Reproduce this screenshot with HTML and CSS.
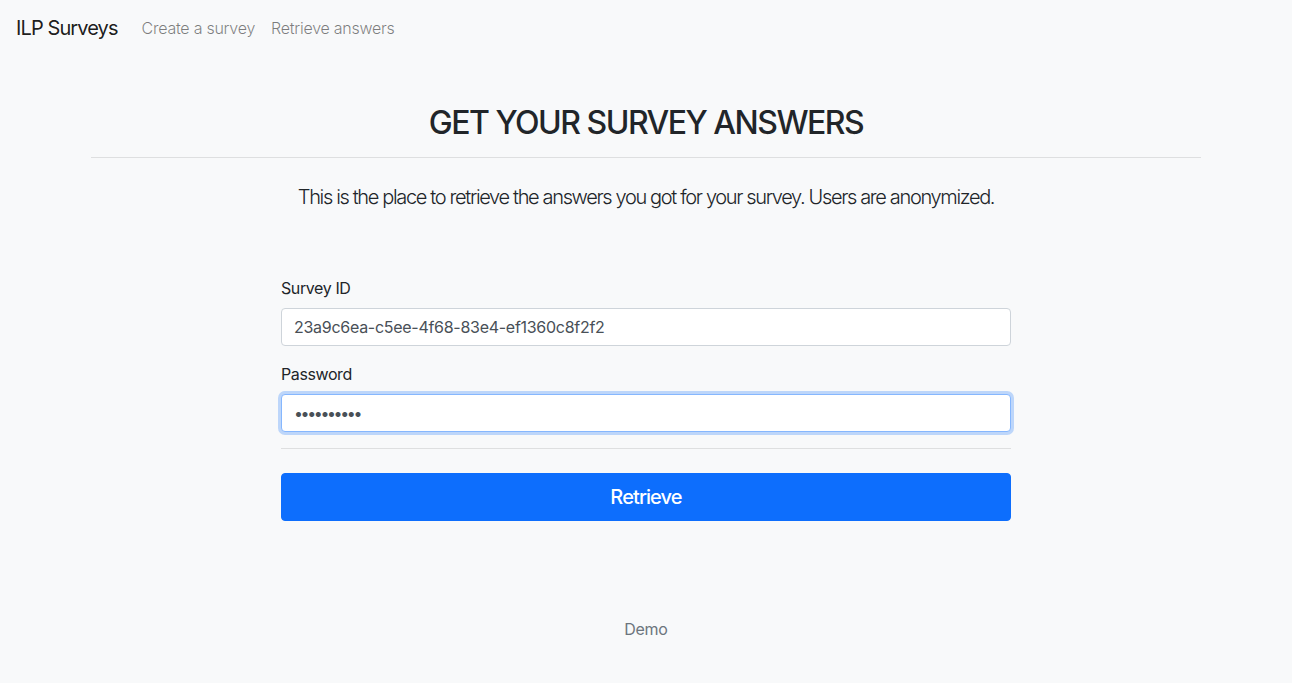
FILE: index.html
```html
<!DOCTYPE html>
<html lang="en">
<head>
<meta charset="utf-8">
<title>ILP Surveys</title>
<link rel="stylesheet" href="styles.css">
</head>
<body>
<nav class="navbar">
  <a class="brand" href="#">ILP Surveys</a>
  <ul class="nav-links">
    <li><a href="#">Create a survey</a></li>
    <li><a href="#">Retrieve answers</a></li>
  </ul>
</nav>
<main class="container">
  <h2 class="title">GET YOUR SURVEY ANSWERS</h2>
  <hr class="rule">
  <p class="lead">This is the place to retrieve the answers you got for your survey. Users are anonymized.</p>
  <form class="form">
    <div class="form-group">
      <label class="label" for="sid">Survey ID</label>
      <input class="control" id="sid" type="text" value="23a9c6ea-c5ee-4f68-83e4-ef1360c8f2f2">
    </div>
    <div class="form-group">
      <label class="label" for="pw">Password</label>
      <input class="control focused password" id="pw" type="password" value="abcdefghij">
    </div>
    <hr class="rule form-rule">
    <button class="btn" type="button">Retrieve</button>
  </form>
  <footer class="footer">Demo</footer>
</main>
</body>
</html>
```

FILE: styles.css
```css
* { box-sizing: border-box; }
html, body { margin: 0; padding: 0; }
body {
  background: #f8f9fa;
  color: #212529;
  font-family: Inter, "Noto Sans", "Liberation Sans", sans-serif;
  font-size: 16px;
  line-height: 1.5;
  letter-spacing: -0.35px;
  min-height: 683px;
}
.navbar {
  display: flex;
  align-items: center;
  padding: 8px 16px;
  height: 56px;
}
.brand {
  font-size: 20px;
  line-height: 30px;
  padding: 5px 0;
  margin-right: 16px;
  color: rgba(0,0,0,.9);
  text-decoration: none;
  letter-spacing: -0.9px;
}
.nav-links {
  display: flex;
  list-style: none;
  margin: 0;
  padding: 0;
}
.nav-links a {
  display: block;
  padding: 8px;
  color: rgba(0,0,0,.5);
  text-decoration: none;
  font-weight: 300;
  letter-spacing: -0.25px;
}
.container {
  width: 1140px;
  margin: 0 auto;
  padding: 48px 15px 0;
}
.title {
  margin: 0 0 8px;
  font-size: 32px;
  font-weight: 500;
  line-height: 1.2;
  text-align: center;
  letter-spacing: -1.5px;
}
.rule {
  border: 0;
  border-top: 1px solid rgba(0,0,0,.1);
  margin: 15px 0 0;
}
.lead {
  margin: 24px 0 0;
  font-size: 20px;
  font-weight: 300;
  line-height: 30px;
  text-align: center;
  letter-spacing: -1.35px;
}
.form {
  width: 730px;
  margin: 64px auto 0;
}
.form-group { margin-bottom: 16px; }
.label {
  display: block;
  margin-bottom: 8px;
  letter-spacing: -0.4px;
}
.control {
  display: block;
  width: 100%;
  height: 38px;
  padding: 6px 12px;
  font-family: inherit;
  font-size: 16px;
  line-height: 1.5;
  color: #495057;
  background: #fff;
  border: 1px solid #ced4da;
  border-radius: 4px;
  outline: none;
  letter-spacing: -0.28px;
}
.control.focused {
  border-color: #86b7fe;
  box-shadow: 0 0 0 3px rgba(13,110,253,.25);
}
.control.password { letter-spacing: -2.4px; }
.form-rule { margin: 0 0 24px; }
.btn {
  display: block;
  width: 100%;
  height: 48px;
  border: 1px solid #0d6efd;
  background: #0d6efd;
  color: #fff;
  font-family: inherit;
  font-size: 20px;
  font-weight: 500;
  border-radius: 4px;
  padding: 8px 16px;
  line-height: 30px;
  letter-spacing: -0.9px;
}
.footer {
  margin-top: 96px;
  text-align: center;
  color: #6c757d;
  letter-spacing: -0.3px;
}
```
